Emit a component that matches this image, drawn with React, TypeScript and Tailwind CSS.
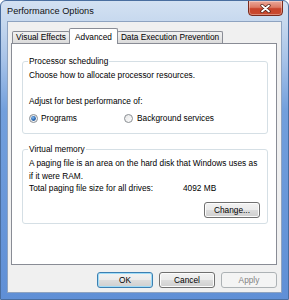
import React from "react";

function Radio({ checked, id }: { checked?: boolean; id: string }) {
  return (
    <svg width="9" height="9" viewBox="0 0 9 9" className="shrink-0">
      <defs>
        <linearGradient id={`rg-${id}`} x1="0" y1="0" x2="1" y2="1">
          <stop offset="0" stopColor="#e4e4e4" />
          <stop offset="1" stopColor="#ffffff" />
        </linearGradient>
        <radialGradient id={`rd-${id}`} cx="0.4" cy="0.35" r="0.7">
          <stop offset="0" stopColor="#8fc3f0" />
          <stop offset="0.6" stopColor="#2c6bb8" />
          <stop offset="1" stopColor="#1d4f8f" />
        </radialGradient>
      </defs>
      <circle cx="4.5" cy="4.5" r="4" fill={`url(#rg-${id})`} stroke="#8b8f94" strokeWidth="1" />
      {checked && <circle cx="4.5" cy="4.5" r="2.4" fill={`url(#rd-${id})`} />}
    </svg>
  );
}

function Btn({
  children,
  kind = "normal",
  className = "",
}: {
  children: React.ReactNode;
  kind?: "normal" | "default" | "disabled";
  className?: string;
}) {
  const base =
    "h-[16px] rounded-[3px] flex items-center justify-center border leading-none";
  if (kind === "default")
    return (
      <div
        className={`${base} border-[#3c7fb1] bg-[linear-gradient(#f2f2f2_0%,#ebebeb_50%,#dddddd_50%,#cfcfcf_100%)] shadow-[inset_0_0_0_1px_#9fdcf8] text-black ${className}`}
      >
        {children}
      </div>
    );
  if (kind === "disabled")
    return (
      <div
        className={`${base} border-[#adb2b5] bg-[#f4f4f4] text-[#838383] ${className}`}
      >
        {children}
      </div>
    );
  return (
    <div
      className={`${base} border-[#707070] bg-[linear-gradient(#f2f2f2_0%,#ebebeb_50%,#dddddd_50%,#cfcfcf_100%)] shadow-[inset_0_0_0_1px_#fcfcfc] text-black ${className}`}
    >
      {children}
    </div>
  );
}

export default function App() {
  return (
    <div
      className="relative w-[289px] h-[300px] overflow-hidden rounded-t-[6px] border border-[#4a6e9f] bg-[linear-gradient(#d3e1f2_0px,#c6d8ee_22px,#a6c2e8_60px,#729fdc_110px,#5f8fd6_300px)] text-black text-[8.3px]"
      style={{ fontFamily: '"Liberation Sans", Arial, sans-serif' }}
    >
      {/* Title bar */}
      <div className="h-[20px] flex items-center pl-[6px] pt-[2px] text-[9.2px] text-[#111]">
        Performance Options
      </div>

      {/* Close button */}
      <div className="absolute top-[-1px] left-[247px] w-[35px] h-[16px] rounded-b-[4px] border border-[#7a2a1c] bg-[linear-gradient(#eaa89a_0%,#dd7a64_45%,#c8432a_55%,#c94a2f_100%)] shadow-[inset_0_0_0_1px_rgba(255,255,255,0.35)] flex items-center justify-center">
        <svg width="11" height="9" viewBox="0 0 11 9">
          <path d="M2 1.5 L9 7.5 M9 1.5 L2 7.5" stroke="#4a1a12" strokeWidth="3.2" strokeLinecap="round" />
          <path d="M2 1.5 L9 7.5 M9 1.5 L2 7.5" stroke="#ffffff" strokeWidth="1.8" strokeLinecap="round" />
        </svg>
      </div>

      {/* Client area */}
      <div className="ml-[6px] w-[275px] h-[272px] border border-[#8ea3c0] bg-[#f0f0f0] flex flex-col">
        {/* Tabs */}
        <div className="mt-[6px] ml-[3px] flex flex-col">
          <div className="h-[15px] flex items-end pl-[1px] relative z-10">
            <div className="w-[58px] h-[12px] border border-b-0 border-[#898c95] rounded-t-[2px] bg-[linear-gradient(#f2f2f2,#e8e8e8_50%,#dadada)] flex items-center justify-center">
              Visual Effects
            </div>
            <div className="-ml-[1px] w-[49px] h-[16px] -mb-[1px] border border-b-0 border-[#898c95] rounded-t-[2px] bg-white flex items-start justify-center pt-[2px] relative z-20">
              Advanced
            </div>
            <div className="-ml-[1px] w-[106px] h-[12px] border border-b-0 border-[#898c95] rounded-t-[2px] bg-[linear-gradient(#f2f2f2,#e8e8e8_50%,#dadada)] flex items-center justify-center">
              Data Execution Prevention
            </div>
          </div>

          {/* Panel */}
          <div className="w-[266px] h-[222px] border border-[#898c95] bg-white flex flex-col">
            {/* Processor scheduling */}
            <div className="relative mt-[17px] ml-[10px] w-[246px] h-[73px] border border-[#d5dfe5] rounded-[3px] flex flex-col pl-[6px]">
              <div className="absolute left-[5px] top-[-7px] h-[13px] px-[1px] bg-white leading-[13px]">
                Processor scheduling
              </div>
              <div className="mt-[7px] h-[13px] leading-[13px]">
                Choose how to allocate processor resources.
              </div>
              <div className="mt-[13px] h-[13px] leading-[13px]">
                Adjust for best performance of:
              </div>
              <div className="mt-[4px] h-[13px] flex items-center">
                <div className="w-[95px] flex items-center">
                  <Radio checked id="a" />
                  <span className="ml-[3px]">Programs</span>
                </div>
                <Radio id="b" />
                <span className="ml-[4px]">Background services</span>
              </div>
            </div>

            {/* Virtual memory */}
            <div className="relative mt-[15px] ml-[10px] w-[246px] h-[75px] border border-[#d5dfe5] rounded-[3px] flex flex-col pl-[6px]">
              <div className="absolute left-[5px] top-[-7px] h-[13px] px-[1px] bg-white leading-[13px]">
                Virtual memory
              </div>
              <div className="mt-[7px] leading-[13px]">
                A paging file is an area on the hard disk that Windows uses as
                <br />
                if it were RAM.
              </div>
              <div className="mt-[-1px] h-[13px] leading-[13px] flex">
                <span className="w-[154px]">Total paging file size for all drives:</span>
                <span>4092 MB</span>
              </div>
              <div className="mt-[7px] flex justify-end pr-[7px]">
                <Btn className="w-[56px]">Change...</Btn>
              </div>
            </div>
          </div>
        </div>

        {/* Bottom buttons */}
        <div className="mt-[7px] flex justify-end gap-[6px] pr-[4px]">
          <Btn kind="default" className="w-[56px]">OK</Btn>
          <Btn className="w-[56px]">Cancel</Btn>
          <Btn kind="disabled" className="w-[56px]">Apply</Btn>
        </div>
      </div>
    </div>
  );
}
